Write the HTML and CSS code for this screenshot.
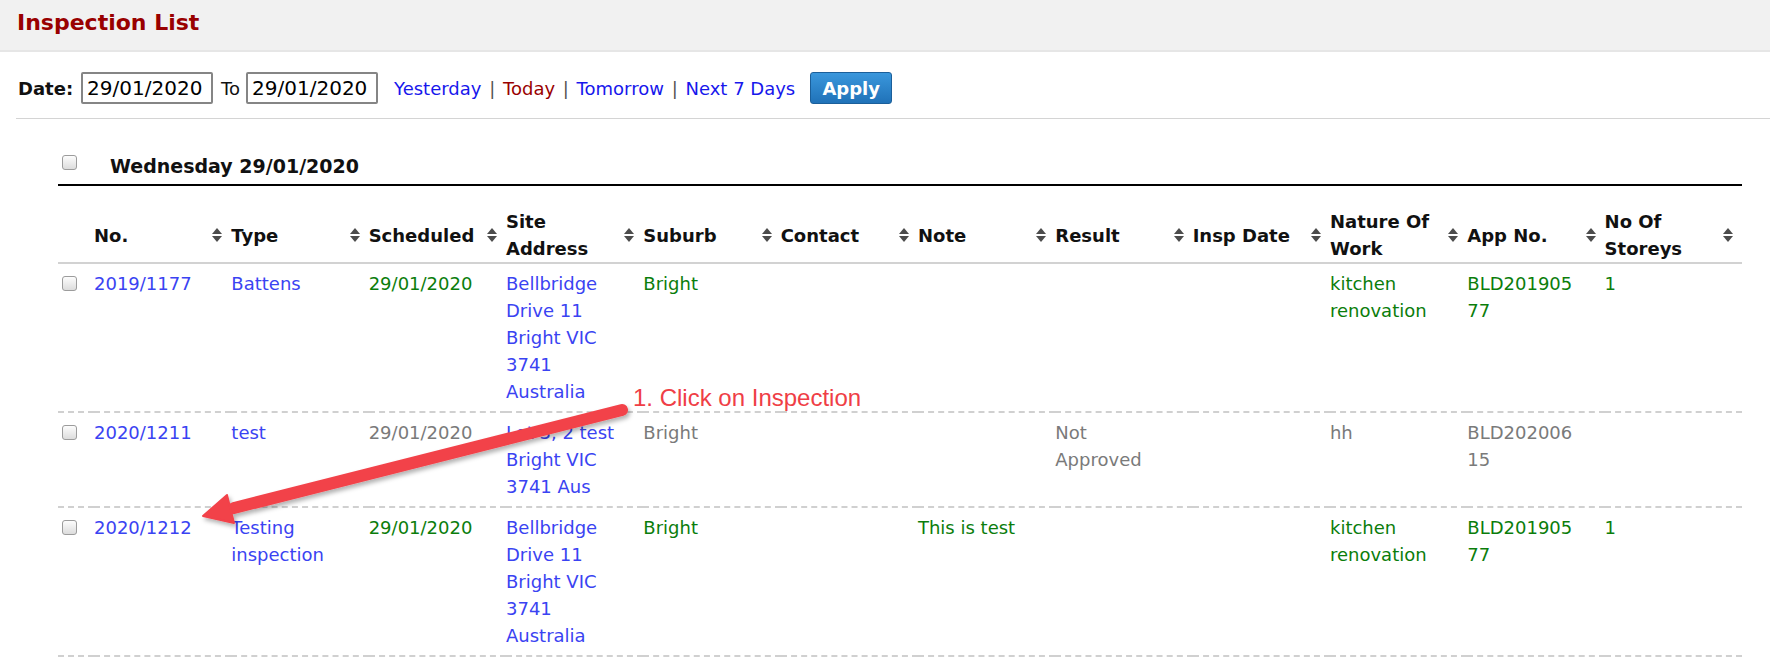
FILE: index.html
```html
<!DOCTYPE html>
<html lang="en">

<head>
    <meta charset="UTF-8">
    <meta name="viewport" content="width=device-width, initial-scale=1.0">
    <title>Inspection List</title>
    <link rel="stylesheet" href="styles.css">
</head>
<body>
    <div class="page-header">
        <h1>Inspection List</h1>
    </div>

    <div class="filter-bar">
        <label class="filter-label">Date:</label>
        <input type="text" class="date-input" value="29/01/2020">
        <span class="to">To</span>
        <input type="text" class="date-input" value="29/01/2020">
        <div class="quick-links"><a href="#">Yesterday</a> <span class="sep">|</span> <a href="#" class="today">Today</a> <span class="sep">|</span> <a href="#">Tomorrow</a> <span class="sep">|</span> <a href="#">Next 7 Days</a></div>
        <button class="apply-btn">Apply</button>
    </div>

    <div class="day-group">
        <div class="group-head">
            <input type="checkbox" class="check">
            <span class="group-title">Wednesday 29/01/2020</span>
        </div>

        <table class="inspections">
            <colgroup>
                <col class="col-check">
                <col span="12">
            </colgroup>
            <thead>
                <tr>
                    <th></th>
                    <th><div class="th-in"><span class="lbl">No.</span><span class="sort"></span></div></th>
                    <th><div class="th-in"><span class="lbl">Type</span><span class="sort"></span></div></th>
                    <th><div class="th-in"><span class="lbl">Scheduled</span><span class="sort"></span></div></th>
                    <th><div class="th-in"><span class="lbl">Site Address</span><span class="sort"></span></div></th>
                    <th><div class="th-in"><span class="lbl">Suburb</span><span class="sort"></span></div></th>
                    <th><div class="th-in"><span class="lbl">Contact</span><span class="sort"></span></div></th>
                    <th><div class="th-in"><span class="lbl">Note</span><span class="sort"></span></div></th>
                    <th><div class="th-in"><span class="lbl">Result</span><span class="sort"></span></div></th>
                    <th><div class="th-in"><span class="lbl">Insp Date</span><span class="sort"></span></div></th>
                    <th><div class="th-in"><span class="lbl">Nature Of Work</span><span class="sort"></span></div></th>
                    <th><div class="th-in"><span class="lbl">App No.</span><span class="sort"></span></div></th>
                    <th><div class="th-in"><span class="lbl">No Of Storeys</span><span class="sort"></span></div></th>
                </tr>
            </thead>
            <tbody>
                <tr>
                    <td class="cell-check"><input type="checkbox" class="check"></td>
                    <td><a href="#">2019/1177</a></td>
                    <td><a href="#">Battens</a></td>
                    <td class="ok">29/01/2020</td>
                    <td><a href="#">Bellbridge Drive 11 Bright VIC 3741 Australia</a></td>
                    <td class="ok">Bright</td>
                    <td></td>
                    <td></td>
                    <td></td>
                    <td></td>
                    <td class="ok">kitchen renovation</td>
                    <td class="ok">BLD20190577</td>
                    <td class="ok">1</td>
                </tr>
                <tr class="done">
                    <td class="cell-check"><input type="checkbox" class="check"></td>
                    <td><a href="#">2020/1211</a></td>
                    <td><a href="#">test</a></td>
                    <td>29/01/2020</td>
                    <td><a href="#">Lot 3, 2 test Bright VIC 3741 Aus</a></td>
                    <td>Bright</td>
                    <td></td>
                    <td></td>
                    <td>Not Approved</td>
                    <td></td>
                    <td>hh</td>
                    <td>BLD20200615</td>
                    <td></td>
                </tr>
                <tr>
                    <td class="cell-check"><input type="checkbox" class="check"></td>
                    <td><a href="#">2020/1212</a></td>
                    <td><a href="#">Testing inspection</a></td>
                    <td class="ok">29/01/2020</td>
                    <td><a href="#">Bellbridge Drive 11 Bright VIC 3741 Australia</a></td>
                    <td class="ok">Bright</td>
                    <td></td>
                    <td class="ok">This is test</td>
                    <td></td>
                    <td></td>
                    <td class="ok">kitchen renovation</td>
                    <td class="ok">BLD20190577</td>
                    <td class="ok">1</td>
                </tr>
            </tbody>
        </table>
    </div>

    <!-- anotacion del tutorial -->
    <svg class="callout" width="1770" height="661" viewBox="0 0 1770 661">
        <defs>
            <filter id="shadow" x="-10%" y="-50%" width="120%" height="200%">
                <feDropShadow dx="2" dy="3" stdDeviation="2" flood-color="#000" flood-opacity="0.3"/>
            </filter>
        </defs>
        <g filter="url(#shadow)" fill="#f2424a" stroke="#f2424a">
            <line x1="622" y1="410" x2="234" y2="508" stroke-width="12" stroke-linecap="round"/>
            <polygon points="203,516 227,495 234,523" stroke-width="2" stroke-linejoin="round"/>
        </g>
        <text x="633" y="406" class="callout-text">1. Click on Inspection</text>
    </svg>
</body>
</html>
```

FILE: styles.css
```css
body {
    margin: 0;
    font-family: "DejaVu Sans", Verdana, sans-serif;
    font-size: 18px;
    color: #111;
    position: relative;
}

a {
    text-decoration: none;
}

.page-header {
    height: 52px;
    box-sizing: border-box;
    background-color: #f1f1f1;
    border-bottom: 2px solid #e6e6e6;
    padding: 0 17px;
}

.page-header h1 {
    margin: 0;
    font-size: 22px;
    line-height: 46px;
    color: #990000;
}

.filter-bar {
    display: flex;
    align-items: center;
    margin-left: 16px;
    padding: 20px 0 14px 2px;
    border-bottom: 1px solid #d4d4d4;
}

.filter-label {
    font-weight: bold;
    margin-right: 8px;
}

.date-input {
    width: 132px;
    height: 32px;
    box-sizing: border-box;
    padding: 0 4px;
    border: 2px solid #858585;
    border-radius: 2px;
    font-family: "DejaVu Sans", Verdana, sans-serif;
    font-size: 20px;
    color: #000;
}

.to {
    margin: 0 6px 0 8px;
}

.quick-links {
    margin-left: 16px;
    white-space: nowrap;
}

.quick-links a {
    color: #1717ec;
}

.quick-links .today {
    color: #990000;
}

.quick-links .sep {
    color: #555;
    margin: 0 2px;
}

.apply-btn {
    margin-left: 15px;
    width: 82px;
    height: 32px;
    font-family: "DejaVu Sans", Verdana, sans-serif;
    font-size: 18px;
    font-weight: bold;
    color: white;
    background: linear-gradient(#3a97dc, #2072b8);
    border: 1px solid #1b5f9a;
    border-radius: 3px;
    cursor: pointer;
}

.day-group {
    margin: 0 28px 0 58px;
}

.group-head {
    display: flex;
    align-items: flex-start;
    padding: 33px 0 4px 4px;
    border-bottom: 2px solid #000;
    line-height: 27px;
}

.group-title {
    font-size: 19px;
    font-weight: bold;
    margin-left: 33px;
    margin-top: 1px;
}

.check {
    appearance: none;
    width: 15px;
    height: 15px;
    margin: 3px 0 0 0;
    border: 1px solid #9c9c9c;
    border-radius: 3px;
    background: linear-gradient(#fdfdfd, #dcdcdc);
}

.inspections {
    width: 100%;
    margin-top: 20px;
    border-collapse: collapse;
    table-layout: fixed;
    line-height: 27px;
}

.col-check {
    width: 36px;
}

.inspections th {
    padding: 2px 9px 0 0;
    text-align: left;
    vertical-align: middle;
    border-bottom: 2px solid #d2d2d2;
}

.th-in {
    display: flex;
    align-items: center;
}

.th-in .lbl {
    flex: 1;
}

.sort {
    display: flex;
    flex-direction: column;
    gap: 2px;
    width: 10px;
    margin-left: 8px;
    align-items: center;
}

.sort::before,
.sort::after {
    content: "";
    border-left: 5px solid transparent;
    border-right: 5px solid transparent;
}

.sort::before {
    border-bottom: 6px solid #4c4c4c;
}

.sort::after {
    border-top: 6px solid #4c4c4c;
}

.inspections td {
    padding: 6px 27px 6px 0;
    vertical-align: top;
    overflow-wrap: break-word;
    border-bottom: 2px dashed #d0d0d0;
}

.inspections td a {
    color: #3a43f2;
}

.inspections td.cell-check {
    padding: 6px 0 6px 4px;
}

.cell-check .check {
    margin-top: 6px;
    display: block;
}

.inspections td.ok {
    color: #0b7d0b;
}

.inspections .done td {
    color: #7a7a7a;
}

.callout {
    position: absolute;
    top: 0;
    left: 0;
    pointer-events: none;
}

.callout-text {
    font-family: "Liberation Sans", Arial, sans-serif;
    font-size: 24px;
    fill: #ef3e46;
}
```
